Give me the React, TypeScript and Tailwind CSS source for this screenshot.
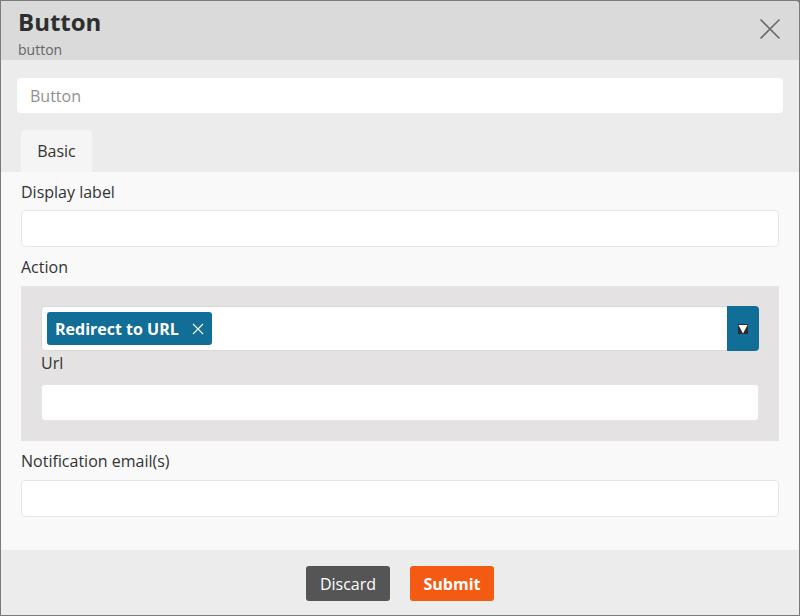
import { FC } from 'react';

const font = { fontFamily: '"Open Sans", "Liberation Sans", sans-serif' };

interface FieldLabelProps {
  text: string;
  className?: string;
}

const FieldLabel: FC<FieldLabelProps> = ({ text, className = '' }) => (
  <div className={`h-6 text-base leading-6 text-[#333] ${className}`}>{text}</div>
);

const TextBox: FC<{ className?: string }> = ({ className = '' }) => (
  <div className={`h-[37px] w-full rounded-[4px] border border-[#e6e6e6] bg-white ${className}`} />
);

const CloseIcon = () => (
  <svg width="22" height="22" viewBox="0 0 22 22" fill="none" stroke="#6b6b6b" strokeWidth="1.6">
    <path d="M1.5 1.5 L20.5 20.5 M20.5 1.5 L1.5 20.5" />
  </svg>
);

const DropTriangle = () => (
  <svg width="10" height="10" viewBox="0 0 10 10">
    <rect width="10" height="10" fill="#2b2b2b" />
    <polygon points="0.5,1 9.5,1 5,9.5" fill="#ffffff" />
  </svg>
);

const SmallX = () => (
  <svg width="12" height="12" viewBox="0 0 12 12" fill="none" stroke="#ffffff" strokeWidth="1.1">
    <path d="M1 1 L11 11 M11 1 L1 11" />
  </svg>
);

export default function App() {
  return (
    <div className="w-[800px] h-[616px] bg-[#7a7a7a] p-px" style={font}>
      <div className="flex h-[614px] w-[798px] flex-col overflow-hidden rounded-tr-[4px] bg-[#f9f9f9]">
        {/* header */}
        <div className="flex h-[59px] shrink-0 items-start justify-between bg-[#dadada] pl-[17px] pr-[17px]">
          <div className="pt-[5px]">
            <h1 className="text-2xl leading-8 font-bold text-[#2e2e2e]">Button</h1>
            <div className="mt-[2px] text-sm leading-5 text-[#666]">button</div>
          </div>
          <button className="mt-[17px] mr-[1px]" aria-label="close">
            <CloseIcon />
          </button>
        </div>

        {/* name + tabs */}
        <div className="shrink-0 bg-[#ececec] px-[16px] pt-[18px]">
          <div className="flex h-[35px] items-center rounded-[4px] bg-white pl-[13px] text-base text-[#8f8f8f]">
            Button
          </div>
          <div className="mt-[17px] flex pl-[4px]">
            <div className="flex h-[42px] w-[71px] items-center justify-center rounded-t-[4px] bg-[#f5f5f5] text-base text-[#333]">
              Basic
            </div>
          </div>
        </div>

        {/* fields */}
        <div className="flex-1 px-5 pt-2">
          <FieldLabel text="Display label" />
          <TextBox className="mt-[6px]" />

          <FieldLabel text="Action" className="mt-2" />
          <div className="mt-[7px] bg-[#e4e2e3] p-5">
            <div className="flex h-[45px] rounded-[4px] border border-[#d9d9d9] bg-white">
              <div className="flex flex-1 items-start pl-[5px] pt-[5px]">
                <div className="flex h-[33px] items-center gap-[13px] rounded-[3px] bg-[#116e96] pl-[8px] pr-[8px] text-base font-bold text-white">
                  <span>Redirect to URL</span>
                  <SmallX />
                </div>
              </div>
              <div className="-my-px -mr-px flex w-[32px] items-center justify-center rounded-r-[4px] bg-[#116e96]">
                <DropTriangle />
              </div>
            </div>
            <FieldLabel text="Url" />
            <TextBox className="mt-[9px]" />
          </div>

          <FieldLabel text="Notification email(s)" className="mt-2" />
          <TextBox className="mt-[7px]" />
        </div>

        {/* footer */}
        <div className="flex h-[65px] shrink-0 items-start justify-center gap-5 bg-[#ececec] pt-4">
          <button className="h-[35px] w-[84px] rounded-[3px] bg-[#555555] text-base text-white">Discard</button>
          <button className="h-[35px] w-[84px] rounded-[3px] bg-[#f35b13] text-base font-bold text-white">Submit</button>
        </div>
      </div>
    </div>
  );
}
